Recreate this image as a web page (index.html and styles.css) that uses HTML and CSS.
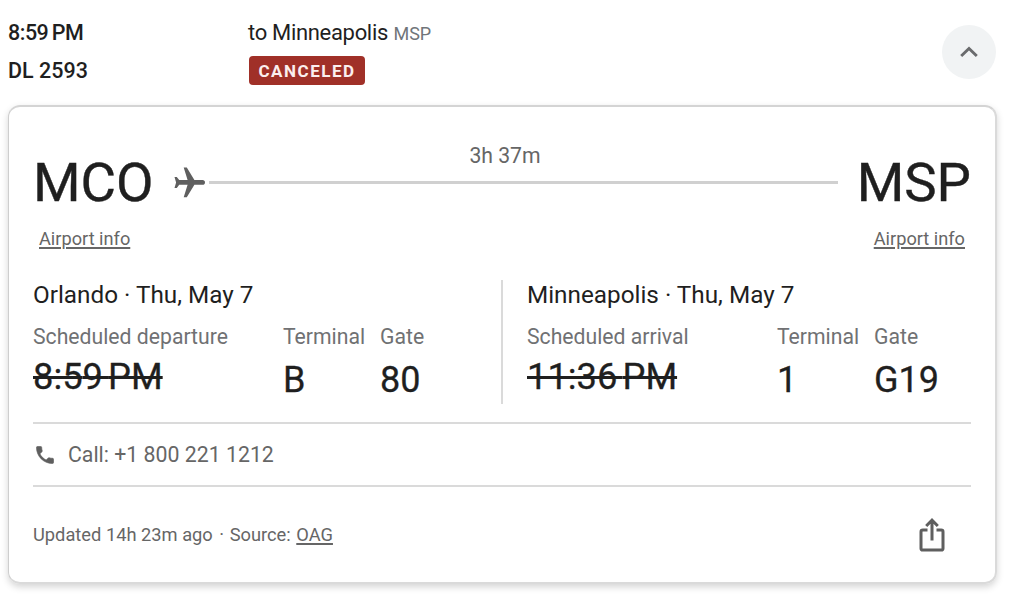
FILE: index.html
```html
<!DOCTYPE html>
<html lang="en">
<head>
<meta charset="utf-8">
<title>DL 2593 to Minneapolis</title>
<link rel="stylesheet" href="styles.css">
</head>
<body>
<header class="summary">
  <div class="summary-flight">
    <div class="summary-time">8:5<span class="thin">9</span>PM</div>
    <div class="summary-number">DL 2593</div>
  </div>
  <div class="summary-route">
    <div class="summary-dest"><span class="dest-city">to Minneapolis</span> <span class="dest-code">MSP</span></div>
    <span class="badge">CANCELED</span>
  </div>
  <button class="toggle" aria-label="Collapse">
    <svg width="20" height="14" viewBox="0 0 20 14"><path d="M2.2 11 10 3.4 17.8 11" fill="none" stroke="#6a6b6d" stroke-width="2.9"/></svg>
  </button>
</header>
<main class="card">
  <section class="route">
    <div class="code code-from">MCO</div>
    <svg class="plane" width="31" height="31" viewBox="0 0 31 31"><path d="M31 15.4c0-1.4-1-2.300-2.400-2.300h-8.200L12.800.6H9.700l3.900 12.500H5.200L2.800 9.900H.5l1.600 5.500L.5 20.900h2.300l2.400-3.200h8.400L9.700 30.200h3.100l7.600-12.500h8.200c1.400 0 2.400-.9 2.400-2.300z" fill="#5f5f5f"/></svg>
    <div class="path"><div class="duration">3h 37m</div><div class="line"></div></div>
    <div class="code code-to">MSP</div>
  </section>
  <div class="links"><a class="link">Airport info</a><a class="link">Airport info</a></div>
  <section class="details">
    <div class="stop">
      <h2 class="place">Orlando · Thu, May 7</h2>
      <dl class="facts">
        <div><dt>Scheduled departure</dt><dd class="struck">8:5<span class="thin">9</span>PM</dd></div>
        <div><dt>Terminal</dt><dd>B</dd></div>
        <div><dt>Gate</dt><dd>80</dd></div>
      </dl>
    </div>
    <div class="stop stop-arrival">
      <h2 class="place">Minneapolis · Thu, May 7</h2>
      <dl class="facts">
        <div><dt>Scheduled arrival</dt><dd class="struck">11:3<span class="thin">6</span>PM</dd></div>
        <div><dt>Terminal</dt><dd>1</dd></div>
        <div><dt>Gate</dt><dd>G19</dd></div>
      </dl>
    </div>
  </section>
  <div class="call">
    <svg width="18" height="18" viewBox="2.500 2.500 19 19"><path d="M6.620 10.790c1.440 2.830 3.760 5.140 6.590 6.590l2.200-2.200c.27-.27.67-.36 1.020-.24 1.120.37 2.330.57 3.570.57.55 0 1 .45 1 1V20c0 .55-.45 1-1 1C10.610 21 3 13.390 3 4c0-.55.45-1 1-1h3.500c.55 0 1 .45 1 1 0 1.250.2 2.450.57 3.570.110.350.030.740-.250 1.020z" fill="#5f5f5f" stroke="#5f5f5f" stroke-width=".7"/></svg>
    <span>Call: +1 800 221 1212</span>
  </div>
  <footer class="foot">
    <span>Updated 14h 23m ago <span class="dot">·</span> Source: <a class="source">OAG</a></span>
    <svg class="share" width="26" height="34" viewBox="0 0 26 34"><path d="M8.500 12H3.800Q2 12 2 13.800V30.400Q2 32 3.800 32H22.200Q24 32 24 30.400V13.800Q24 12 22.200 12H17.500M13 22.500V3M7.200 8 13 2.200 18.800 8" fill="none" stroke="#5f5f5f" stroke-width="3"/></svg>
  </footer>
</main>
</body>
</html>
```
FILE: styles.css
```css
* { box-sizing: border-box; }
body { margin: 0; height: 597px; overflow: hidden; background: #fff; color: #1f1f1f; font-family: Roboto, "Liberation Sans", sans-serif; }
.summary { display: flex; height: 105px; padding: 14px 28px 0 8px; }
.summary-flight { width: 240px; font-size: 21.5px; font-weight: 500; line-height: 38px; }
.summary-time { letter-spacing: -0.5px; }
.thin { letter-spacing: 0.14em; }
.summary-route { flex: 1; }
.summary-dest { height: 42px; line-height: 38px; font-size: 22px; white-space: nowrap; }
.dest-city { letter-spacing: -0.32px; }
.dest-code { font-size: 18px; color: #70757a; }
.badge { display: block; width: 116px; height: 29px; margin-left: 1px; border-radius: 4px; background: #a03028; color: #fbeeee; font-size: 17px; font-weight: 700; line-height: 30px; text-align: center; letter-spacing: 1.5px; }
.toggle { display: flex; align-items: center; justify-content: center; width: 54px; height: 54px; margin-top: 11px; padding: 0; border: 0; border-radius: 50%; background: #f1f3f4; }
.card { height: 479px; margin: 0 27px 0 8px; padding: 36px 24px 0 24px; border: 2px solid #dadada; border-left: 1px solid #cecece; border-top-color: #d4d4d4; border-radius: 12px; box-shadow: 0 3px 7px rgba(0, 0, 0, .17); }
.route { display: flex; align-items: center; height: 78px; }
.code { font-size: 54.5px; line-height: 64px; -webkit-text-stroke: 0.4px #1f1f1f; }
.code-from { width: 141px; }
.code-to { width: 133px; text-align: right; }
.plane { flex: none; }
.path { flex: 1; align-self: flex-start; margin-left: 4px; }
.duration { margin: 0 37px 12px 0; line-height: 26px; font-size: 21.2px; color: #666; text-align: center; }
.line { height: 3px; background: #d0d0d0; }
.links { display: flex; justify-content: space-between; margin-top: 6px; padding: 0 6px; font-size: 18.2px; line-height: 24px; color: #666; }
.link, .source { text-decoration: underline; text-decoration-thickness: 1.5px; text-underline-offset: 2px; }
.details { display: flex; height: 124px; margin-top: 29px; }
.stop { width: 468px; }
.stop-arrival { border-left: 2px solid #dadada; padding-left: 24px; }
.place { margin: 0 0 14px; font-size: 24.300px; font-weight: 400; line-height: 30px; white-space: nowrap; }
.facts { display: grid; grid-template-columns: 250px 97px 1fr; margin: 0; }
.facts dt { font-size: 21.2px; line-height: 26px; color: #707173; white-space: nowrap; }
.facts dd { margin: 10px 0 0; font-size: 36px; line-height: 40px; white-space: nowrap; -webkit-text-stroke: 0.3px #1f1f1f; }
.facts .struck { margin-top: 7px; font-size: 36.3px; text-decoration: line-through; text-decoration-thickness: 3px; }
.call { display: flex; align-items: center; height: 65px; margin-top: 18px; padding-left: 3px; gap: 14px; border: solid #dadada; border-width: 2px 0; font-size: 21.3px; color: #666; }
.foot { display: flex; justify-content: space-between; align-items: center; height: 95px; padding-right: 26px; font-size: 18.3px; color: #666; }
.dot { margin: 0 1px 0 2px; }
.source { margin-left: 1px; }
```
